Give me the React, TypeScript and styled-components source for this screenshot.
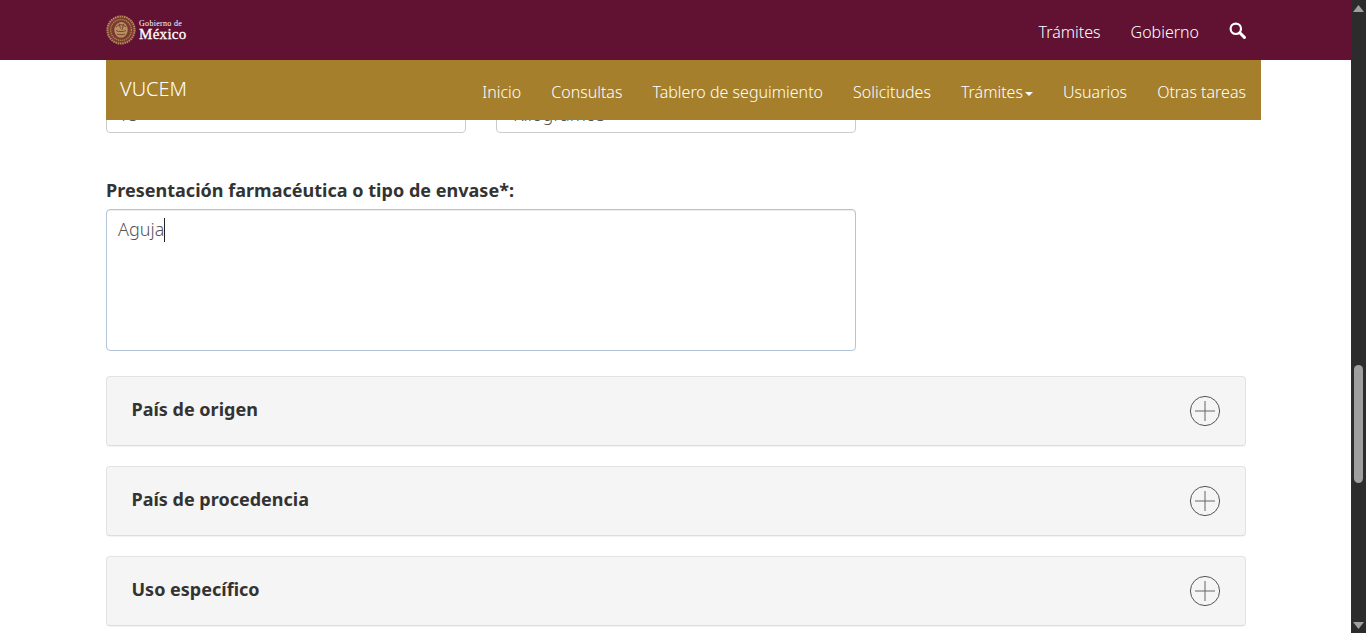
import React from 'react';
import styled, { createGlobalStyle } from 'styled-components';

const maroon = '#611232';
const gold = '#a57f2c';
const font = '"Noto Sans", "Open Sans", sans-serif';

const GlobalStyle = createGlobalStyle`
	html, body {
		margin: 0;
		padding: 0;
		height: 100%;
		overflow: hidden;
		background: #fff;
	}
	* {
		box-sizing: border-box;
	}
`;

const Page = styled.div`
	position: relative;
	width: 1366px;
	height: 633px;
	overflow: hidden;
	font-family: ${font};
	color: #333;
`;

const Header = styled.header`
	position: absolute;
	top: 0;
	left: 0;
	width: 1351px;
	z-index: 2;
`;

const TopBar = styled.div`
	height: 60px;
	background: ${maroon};
	padding: 0 105px 0 106px;
	display: flex;
	align-items: center;
	justify-content: space-between;
`;

const Logo = styled.div`
	display: flex;
	align-items: center;
	gap: 3px;
	color: #fff;
	font-family: "Liberation Serif", serif;
`;

const LogoText = styled.div`
	display: flex;
	flex-direction: column;
	padding-top: 1px;
`;

const LogoSmall = styled.span`
	font-size: 8px;
	line-height: 8px;
	letter-spacing: 0.3px;
`;

const LogoBig = styled.span`
	font-size: 15px;
	line-height: 13px;
	font-weight: 400;
	letter-spacing: 0.3px;
	-webkit-text-stroke: 0.3px #fff;
`;

const TopLinks = styled.nav`
	display: flex;
	align-items: center;
	gap: 30px;
	margin-top: 4px;
`;

const TopLink = styled.a`
	color: #fff;
	font-size: 16px;
	font-weight: 300;
`;

const SearchIcon = styled.svg`
	width: 17px;
	height: 17px;
	margin-top: -3px;
`;

const GoldBar = styled.div`
	height: 60px;
	width: 1155px;
	margin-left: 106px;
	padding: 0 15px 0 14px;
	background: ${gold};
	display: flex;
	justify-content: space-between;
	color: #fff;
`;

const Brand = styled.span`
	font-size: 20px;
	font-weight: 300;
	line-height: 58px;
`;

const SubLinks = styled.nav`
	display: flex;
	gap: 30px;
	padding-top: 21px;
`;

const SubLink = styled.a`
	font-size: 16px;
	font-weight: 300;
	line-height: 22px;
	color: #fff;
`;

const Caret = styled.span`
	display: inline-block;
	margin-left: 2px;
	vertical-align: middle;
	border-top: 4px solid #fff;
	border-left: 4px solid transparent;
	border-right: 4px solid transparent;
`;

const Main = styled.main`
	width: 1140px;
	margin-left: 106px;
	padding-top: 91px;
`;

const InputRow = styled.div`
	display: flex;
	gap: 30px;
	margin-bottom: 45px;
`;

const Input = styled.div`
	width: 360px;
	height: 42px;
	padding: 10px 11px 0;
	border: 1px solid #ccc;
	border-radius: 4px;
	font-size: 18px;
	font-weight: 300;
	line-height: 24px;
	color: #555;
`;

const SelectBox = styled(Input)`
	padding-left: 16px;
`;

const Label = styled.label`
	display: block;
	font-size: 18px;
	font-weight: 700;
	line-height: 24px;
	letter-spacing: 0.02px;
	margin-bottom: 7px;
`;

const TextArea = styled.div`
	width: 750px;
	height: 142px;
	padding: 6px 11px;
	border: 1px solid #b3c4d8;
	border-radius: 4px;
	box-shadow: inset 0 1px 1px rgba(0, 0, 0, 0.075);
	font-size: 18px;
	font-weight: 300;
	line-height: 26px;
	color: #555;
	margin-bottom: 25px;
`;

const TextCursor = styled.span`
	display: inline-block;
	width: 1px;
	height: 24px;
	background: #222;
	vertical-align: -6px;
`;

const Panel = styled.section`
	height: 70px;
	margin-bottom: 20px;
	padding: 0 25px 0 24.5px;
	background: #f5f5f5;
	border: 1px solid #e3e3e3;
	border-bottom-color: #ddd;
	border-radius: 4px;
	box-shadow: 0 1px 1px rgba(0, 0, 0, 0.05);
	display: flex;
	align-items: center;
	justify-content: space-between;
`;

const PanelTitle = styled.h3`
	margin: 0 0 4px;
	font-size: 18px;
	font-weight: 700;
	color: #333;
`;

const PlusIcon = styled.svg`
	width: 32px;
	height: 32px;
	margin: 0 -1px 0 0;
`;

const Scrollbar = styled.div`
	position: absolute;
	top: 0;
	right: 0;
	width: 15px;
	height: 633px;
	background: #2c2c2c;
	z-index: 3;
`;

const ScrollThumb = styled.div`
	position: absolute;
	top: 365px;
	left: 3px;
	width: 9px;
	height: 118px;
	border-radius: 5px;
	background: #9f9f9f;
`;

const ScrollArrow = styled.svg<{ $bottom?: boolean }>`
	position: absolute;
	left: 2px;
	width: 11px;
	height: 7px;
	${(p) => (p.$bottom ? 'bottom: 4px;' : 'top: 5px;')}
`;

function Emblem() {
	return (
		<svg width='30' height='30' viewBox='0 0 30 30'>
			<circle cx='15' cy='15' r='13.6' fill='#7a3a30' stroke='#b5895a' strokeWidth='2' strokeDasharray='1.6 0.7' />
			<circle cx='15' cy='15' r='10.4' fill='none' stroke='#b08454' strokeWidth='1.4' strokeDasharray='1.2 0.8' />
			<path d='M8.5 13c1.5-4 4-6 6.5-6s5.5 2 6.5 6c1 4-1.5 8-4.5 9.5h-4C10 21 7.500 17 8.500 13z' fill='#b8905f' />
			<path d='M10 12c3-3 7-3 10 0M10 15.500c3 1.500 7 1.500 10 0M11 19c2.500 1 5.500 1 8 0M13 8.500l1.500 5M17.500 9l-1.500 6' fill='none' stroke='#74382f' strokeWidth='0.9' />
		</svg>
	);
}

function Plus() {
	return (
		<PlusIcon viewBox='0 0 32 32'>
			<circle cx='16' cy='16' r='14.6' fill='none' stroke='#555' strokeWidth='1' />
			<path d='M16 6v20M6 16h20' fill='none' stroke='#666' strokeWidth='1' />
		</PlusIcon>
	);
}

const panels = ['País de origen', 'País de procedencia', 'Uso específico'];
const subLinks = ['Inicio', 'Consultas', 'Tablero de seguimiento', 'Solicitudes'];

export default function App() {
	return (
		<Page>
			<GlobalStyle />
			<Header>
				<TopBar>
					<Logo>
						<Emblem />
						<LogoText>
							<LogoSmall>Gobierno de</LogoSmall>
							<LogoBig>México</LogoBig>
						</LogoText>
					</Logo>
					<TopLinks>
						<TopLink>Trámites</TopLink>
						<TopLink>Gobierno</TopLink>
						<SearchIcon viewBox='0 0 17 17'>
							<circle cx='6.8' cy='6.8' r='5.2' fill='none' stroke='#fff' strokeWidth='2.2' />
							<path d='M10.8 10.8l4.6 4.6' stroke='#fff' strokeWidth='3' strokeLinecap='round' />
						</SearchIcon>
					</TopLinks>
				</TopBar>
				<GoldBar>
					<Brand>VUCEM</Brand>
					<SubLinks>
						{subLinks.map((l) => (
							<SubLink key={l}>{l}</SubLink>
						))}
						<SubLink>
							Trámites
							<Caret />
						</SubLink>
						<SubLink>Usuarios</SubLink>
						<SubLink>Otras tareas</SubLink>
					</SubLinks>
				</GoldBar>
			</Header>
			<Main>
				<InputRow>
					<Input>15</Input>
					<SelectBox>Kilogramos</SelectBox>
				</InputRow>
				<Label>Presentación farmacéutica o tipo de envase*:</Label>
				<TextArea>
					Aguja
					<TextCursor />
				</TextArea>
				{panels.map((p) => (
					<Panel key={p}>
						<PanelTitle>{p}</PanelTitle>
						<Plus />
					</Panel>
				))}
			</Main>
			<Scrollbar>
				<ScrollArrow viewBox='0 0 11 7'>
					<path d='M5.5 0L11 7H0z' fill='#a0a0a0' />
				</ScrollArrow>
				<ScrollThumb />
				<ScrollArrow $bottom viewBox='0 0 11 7'>
					<path d='M5.5 7L0 0h11z' fill='#a0a0a0' />
				</ScrollArrow>
			</Scrollbar>
		</Page>
	);
}
